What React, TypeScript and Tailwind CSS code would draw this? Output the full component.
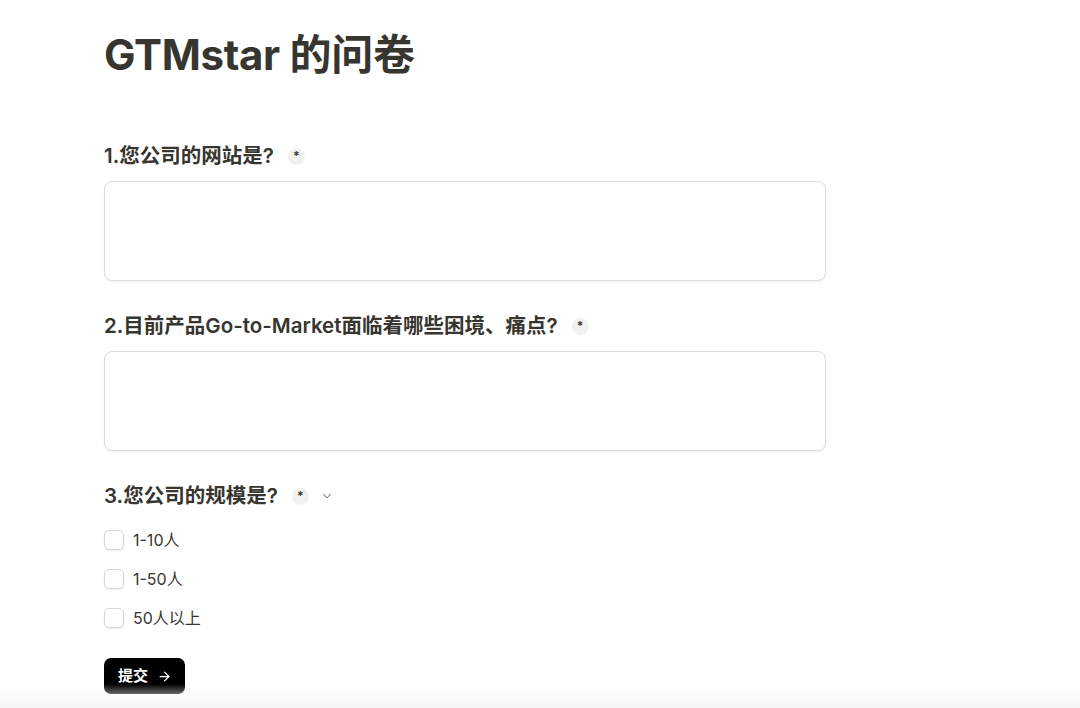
import { ArrowRight, ChevronDown } from 'lucide-react';

const font = { fontFamily: 'Inter, "Noto Sans CJK SC", sans-serif' };

const Required = () => (
  <span className="ml-[14px] inline-flex h-[17px] w-[17px] items-center justify-center rounded-full bg-[#f1f1ef] text-[12px] font-bold leading-none text-[#37352f]">
    *
  </span>
);

const Label = ({ children, extra }: { children: React.ReactNode; extra?: React.ReactNode }) => (
  <div className="flex h-[28px] items-center text-[20.5px] font-semibold text-[#37352f]">
    <span>{children}</span>
    <Required />
    {extra}
  </div>
);

const TextBox = () => (
  <textarea className="mt-[11px] block h-[100px] w-[722px] resize-none rounded-[8px] border border-[#dcdcdc] bg-white shadow-[0_1px_2px_rgba(0,0,0,0.06)] outline-none" />
);

const options = ['1-10人', '1-50人', '50人以上'];

export default function App() {
  return (
    <div style={font} className="relative h-[708px] overflow-hidden bg-white">
      <div className="px-[104px] pt-[27px]">
        <h1 className="text-[42px] font-bold leading-[56px] tracking-[-0.3px] text-[#37352f]">GTMstar 的问卷</h1>

        <div className="mt-[59px]">
          <Label>1.您公司的网站是?</Label>
          <TextBox />
        </div>

        <div className="mt-[31px]">
          <Label>2.目前产品Go-to-Market面临着哪些困境、痛点?</Label>
          <TextBox />
        </div>

        <div className="mt-[31px]">
          <Label extra={<ChevronDown className="ml-[11px] h-[14px] w-[14px] text-[#7a7a7a]" strokeWidth={1.8} />}>
            3.您公司的规模是?
          </Label>
          <div className="mt-[20px] flex flex-col gap-[19px]">
            {options.map((o) => (
              <label key={o} className="flex h-[20px] items-center gap-[9px] text-[16px] text-[#37352f]">
                <span className="h-[20px] w-[20px] rounded-[5px] border border-[#d6d6d6] bg-white shadow-[0_1px_2px_rgba(0,0,0,0.08)]" />
                {o}
              </label>
            ))}
          </div>
        </div>

        <button className="mt-[30px] flex h-[36px] items-center gap-[9px] rounded-[7px] bg-black pl-[14px] pr-[13px] text-[15px] font-semibold text-white">
          提交
          <ArrowRight className="h-[15px] w-[15px]" strokeWidth={2} />
        </button>
      </div>
      <div className="pointer-events-none absolute bottom-0 left-0 right-0 h-[24px] bg-gradient-to-b from-white/0 to-[#f6f6f6]" />
    </div>
  );
}
